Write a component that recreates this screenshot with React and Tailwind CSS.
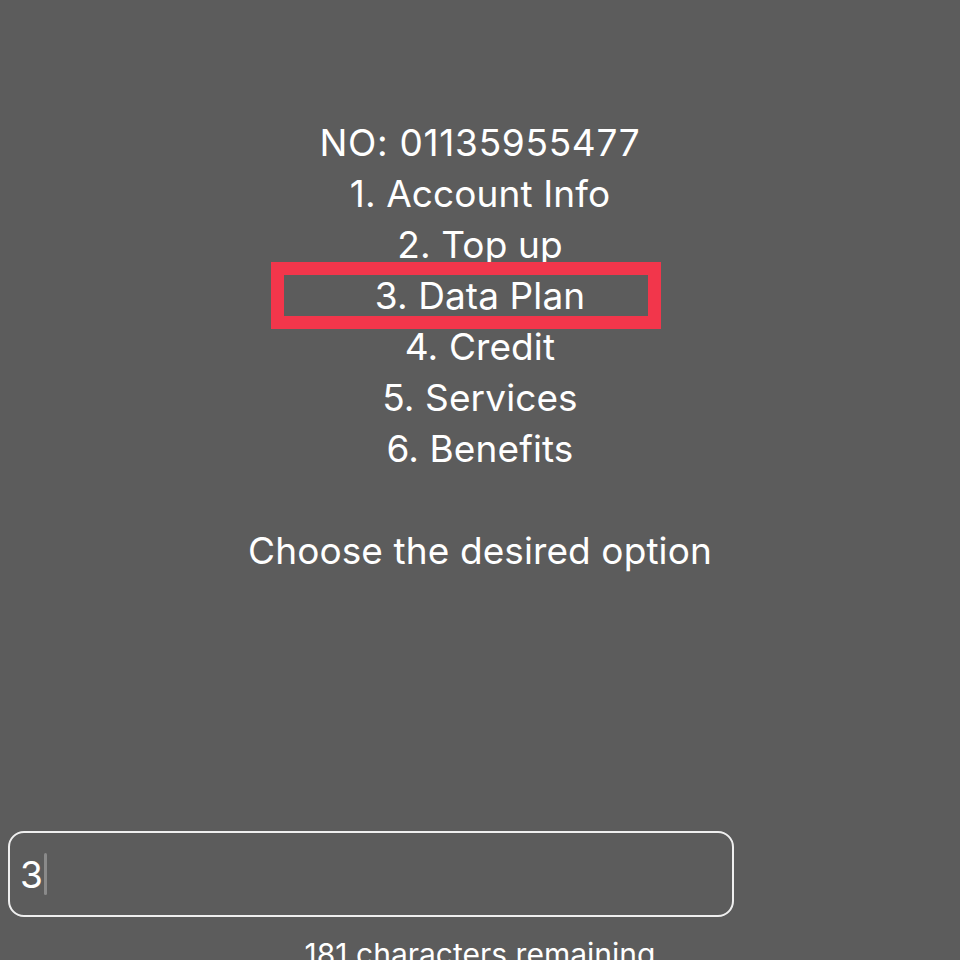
export default function App() {
  const items = ["1. Account Info", "2. Top up", "3. Data Plan", "4. Credit", "5. Services", "6. Benefits"];
  return (
    <div
      className="w-[960px] h-[960px] overflow-hidden bg-[#5c5c5c] text-white flex flex-col"
      style={{ fontFamily: "Inter, 'Noto Sans', sans-serif" }}
    >
      <div className="pt-[117px] flex flex-col items-center text-[37px] leading-[51px] tracking-[0.1px]">
        <div className="tracking-[0.7px]">NO: 01135955477</div>
        {items.map((item) =>
          item.startsWith("3.") ? (
            <div key={item} className="relative">
              <span>{item}</span>
              <div className="absolute left-[-104px] right-[-76px] top-[-8px] bottom-[-8px] border-[13px] border-[#f2364b]" />
            </div>
          ) : (
            <div key={item}>{item}</div>
          )
        )}
        <div className="h-[51px]" />
        <div>Choose the desired option</div>
      </div>
      <div className="mt-auto">
        <div className="ml-[8px] w-[726px] h-[86px] rounded-[16px] border-2 border-white/90 flex items-center pl-[10px]">
          <span className="text-[37px] leading-none">3</span>
          <span className="ml-[1px] w-[3px] h-[42px] bg-[#8a8a8a] rounded-sm" />
        </div>
        <div className="mt-[20px] h-[23px] overflow-hidden text-center text-[30px] leading-[34px] text-white">
          181 characters remaining
        </div>
      </div>
    </div>
  );
}
